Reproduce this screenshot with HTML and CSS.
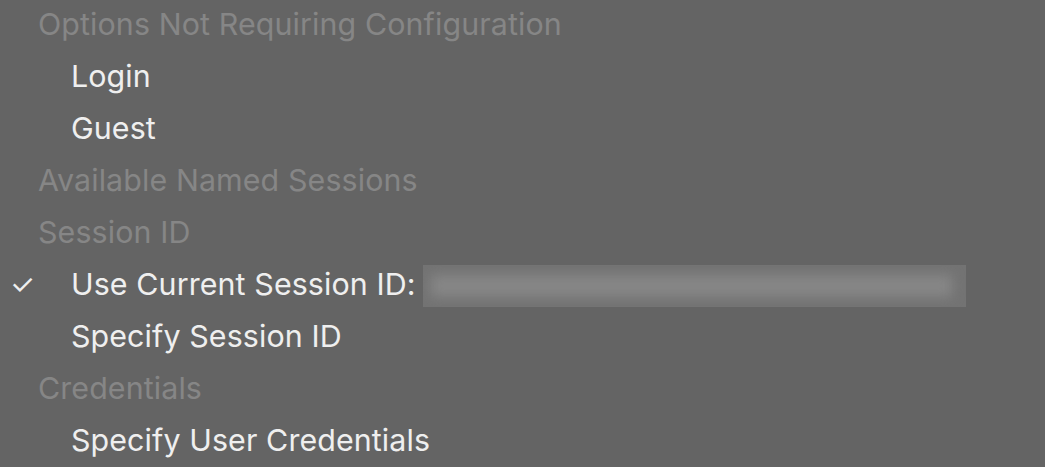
FILE: index.html
```html
<!DOCTYPE html>
<html>
<head>
<meta charset="utf-8">
<link rel="stylesheet" href="styles.css">
</head>
<body>
<div class="menu">
  <div class="row header">Options Not Requiring Configuration</div>
  <div class="row item"><span class="check"></span><span class="label">Login</span></div>
  <div class="row item"><span class="check"></span><span class="label">Guest</span></div>
  <div class="row header">Available Named Sessions</div>
  <div class="row header">Session ID</div>
  <div class="row item"><span class="check">✓</span><span class="label">Use Current Session ID:</span><span class="redacted"><span class="smear"></span></span></div>
  <div class="row item"><span class="check"></span><span class="label">Specify Session ID</span></div>
  <div class="row header">Credentials</div>
  <div class="row item"><span class="check"></span><span class="label">Specify User Credentials</span></div>
</div>
</body>
</html>
```
FILE: styles.css
```css
html, body {
  margin: 0;
  padding: 0;
  background: #646464;
  width: 1045px;
  height: 467px;
  overflow: hidden;
}
.menu {
  display: flex;
  flex-direction: column;
  font-family: Inter, "Noto Sans", sans-serif;
  font-size: 30.4px;
  letter-spacing: 0.1px;
}
.row {
  height: 52px;
  box-sizing: border-box;
  padding-bottom: 5px;
  display: flex;
  align-items: center;
  white-space: nowrap;
}
.header {
  color: #868686;
  padding-left: 38px;
}
.item {
  color: #efefef;
}
.check {
  width: 71px;
  padding-left: 10px;
  box-sizing: border-box;
  font-size: 28px;
  font-weight: 400;
  color: #efefef;
}
.redacted {
  display: inline-block;
  width: 543px;
  height: 42px;
  margin-left: 7px;
  margin-top: 5px;
  background: #737373;
  overflow: hidden;
  position: relative;
}
.smear {
  position: absolute;
  left: 8px;
  right: 14px;
  top: 10px;
  bottom: 10px;
  background: #868686;
  filter: blur(6px);
}
```
